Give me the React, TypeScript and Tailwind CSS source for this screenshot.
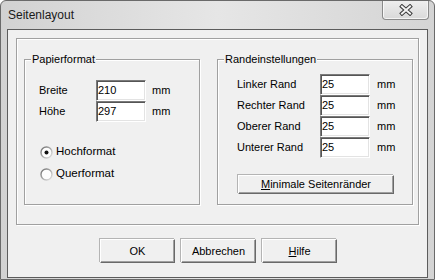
import React from 'react'

// --- Radio ---
const Radio: React.FC<{ checked?: boolean; id: string }> = ({ checked, id }) => (
  <svg width="13" height="13" viewBox="0 0 13 13">
    <defs>
      <linearGradient id={id} x1="0" y1="0" x2="1" y2="1">
        <stop offset="0" stopColor="#6e6e6e" />
        <stop offset="1" stopColor="#e6e6e6" />
      </linearGradient>
    </defs>
    <circle cx="6.5" cy="6.5" r="5.5" fill="#fdfdfd" stroke={`url(#${id})`} strokeWidth="1.4" />
    {checked && <circle cx="6.5" cy="6.5" r="2" fill="#111" />}
  </svg>
)

// --- Eingabefeld ---
const Field: React.FC<{ value: string }> = ({ value }) => (
  <input
    readOnly
    value={value}
    className="h-[21px] w-[50px] border border-t-[#7a7a7a] border-l-[#7a7a7a] border-b-white border-r-white bg-white pl-[1px] pb-[2px] text-black shadow-[inset_1px_1px_0_#555,inset_-1px_-1px_0_#e3e3e3] outline-none"
  />
)

// --- Button ---
const Btn: React.FC<{ className: string; children: React.ReactNode }> = ({ className, children }) => (
  <button
    className={`flex items-center justify-center border border-t-white border-l-white border-b-[#696969] border-r-[#696969] bg-[#f0f0f0] shadow-[inset_-1px_-1px_0_#a0a0a0,-1px_-1px_0_#b4b4b4] ${className}`}
  >
    {children}
  </button>
)

const Group: React.FC<{ title: string; className: string; children: React.ReactNode }> = ({
  title,
  className,
  children,
}) => (
  <div
    className={`flex flex-col border border-[#a0a0a0] shadow-[inset_1px_1px_0_#fff,1px_1px_0_#fff] ${className}`}
  >
    <span className="-mt-[7px] ml-[6px] w-fit bg-[#f0f0f0] px-[1px] leading-[13px]">{title}</span>
    {children}
  </div>
)

const App: React.FC = () => {
  const margins = ['Linker Rand', 'Rechter Rand', 'Oberer Rand', 'Unterer Rand']

  return (
    <div className="flex h-[280px] w-[435px] flex-col rounded-t-[6px] border border-[#6a6a6a] bg-gradient-to-r from-[#d2d2d2] via-[#e6e6e6] to-[#d4d4d4] font-['Liberation_Sans',Arial,sans-serif] text-[11px] text-black">
      {/* Titelleiste */}
      <div className="flex h-[28px] items-start justify-between">
        <span className="pl-[7px] text-[12px] leading-[28px] text-[#1a1a1a]">Seitenlayout</span>
        <div className="mr-[5px] flex h-[19px] w-[47px] items-center justify-center rounded-b-[4px] border border-t-0 border-[#8a8a8a] bg-gradient-to-b from-[#eeeeee] to-[#d9d9d9] shadow-[inset_1px_0_0_#f8f8f8,inset_-1px_-1px_0_#f4f4f4]">
          <svg width="14" height="12" viewBox="0 0 14 12">
            <path d="M3 2.5 L11 9.5 M11 2.5 L3 9.5" stroke="#3a3a3a" strokeWidth="4" strokeLinecap="square" />
            <path d="M3 2.5 L11 9.5 M11 2.5 L3 9.5" stroke="#f4f4f4" strokeWidth="2" strokeLinecap="square" />
          </svg>
        </div>
      </div>

      {/* Inhalt */}
      <div className="mx-[6px] flex h-[249px] flex-col border border-[#5c5c5c] bg-[#f0f0f0]">
        <div className="mx-[8px] mt-[8px] flex h-[187px] border border-[#a0a0a0] pl-[7px] pt-[20px] shadow-[inset_1px_1px_0_#fff,1px_1px_0_#fff]">
          <Group title="Papierformat" className="h-[146px] w-[176px]">
            <div className="mt-[14px] flex flex-col">
              <div className="flex h-[21px] items-center">
                <span className="ml-[14px] w-[57px]">Breite</span>
                <Field value="210" />
                <span className="ml-[6px]">mm</span>
              </div>
              <div className="flex h-[21px] items-center">
                <span className="ml-[14px] w-[57px]">Höhe</span>
                <Field value="297" />
                <span className="ml-[6px]">mm</span>
              </div>
            </div>
            <div className="mt-[19px] flex flex-col">
              <div className="flex h-[22px] items-center pl-[15px]">
                <Radio id="r1" checked />
                <span className="ml-[3px] text-[11.5px]">Hochformat</span>
              </div>
              <div className="flex h-[22px] items-center pl-[15px]">
                <Radio id="r2" />
                <span className="ml-[3px] text-[11.5px]">Querformat</span>
              </div>
            </div>
          </Group>

          <Group title="Randeinstellungen" className="ml-[17px] h-[146px] w-[196px]">
            <div className="mt-[8px] flex flex-col">
              {margins.map((m) => (
                <div key={m} className="flex h-[21px] items-center">
                  <span className="ml-[19px] w-[83px]">{m}</span>
                  <Field value="25" />
                  <span className="ml-[7px]">mm</span>
                </div>
              ))}
            </div>
            <Btn className="ml-[20px] mt-[17px] h-[19px] w-[156px]">
              <span>
                <u>M</u>inimale Seitenränder
              </span>
            </Btn>
          </Group>
        </div>

        <div className="mt-[14px] flex justify-center gap-[6px] pl-[2px]">
          <Btn className="h-[24px] w-[75px]">OK</Btn>
          <Btn className="h-[24px] w-[75px]">Abbrechen</Btn>
          <Btn className="h-[24px] w-[75px]">
            <span>
              <u>H</u>ilfe
            </span>
          </Btn>
        </div>
      </div>
    </div>
  )
}

export default App
